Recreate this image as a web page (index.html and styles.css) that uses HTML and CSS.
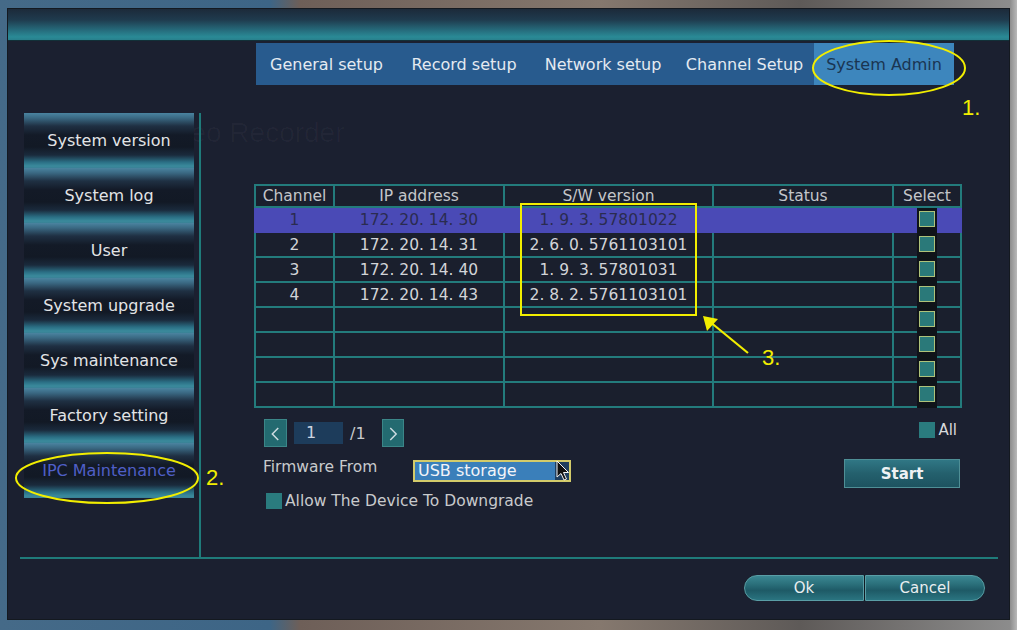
FILE: index.html
```html
<!DOCTYPE html>
<html>
<head>
<meta charset="utf-8">
<title>System Admin - IPC Maintenance</title>
<link rel="stylesheet" href="styles.css">
</head>
<body>
<div class="frame">
  <div class="watermark wm-line">Network Video Recorder</div>
  <div class="titlebar"></div>
  <div class="tabs">
    <div class="tab">General setup</div>
    <div class="tab">Record setup</div>
    <div class="tab">Network setup</div>
    <div class="tab">Channel Setup</div>
    <div class="tab active">System Admin</div>
  </div>
  <div class="main">
    <div class="sidebar">
      <div class="side-item">System version</div>
      <div class="side-item">System log</div>
      <div class="side-item">User</div>
      <div class="side-item">System upgrade</div>
      <div class="side-item">Sys maintenance</div>
      <div class="side-item">Factory setting</div>
      <div class="side-item current">IPC Maintenance</div>
    </div>
    <div class="vsep"></div>
    <div class="content">
      <div class="table-wrap">
        <div class="grid">
          <div class="row head">
            <div class="cell">Channel</div>
            <div class="cell">IP address</div>
            <div class="cell">S/W version</div>
            <div class="cell">Status</div>
            <div class="cell">Select</div>
          </div>
          <div class="row sel">
            <div class="cell">1</div>
            <div class="cell">172. 20. 14. 30</div>
            <div class="cell">1. 9. 3. 57801022</div>
            <div class="cell"></div>
            <div class="cell"></div>
          </div>
          <div class="row">
            <div class="cell">2</div>
            <div class="cell">172. 20. 14. 31</div>
            <div class="cell">2. 6. 0. 5761103101</div>
            <div class="cell"></div>
            <div class="cell"></div>
          </div>
          <div class="row">
            <div class="cell">3</div>
            <div class="cell">172. 20. 14. 40</div>
            <div class="cell">1. 9. 3. 57801031</div>
            <div class="cell"></div>
            <div class="cell"></div>
          </div>
          <div class="row">
            <div class="cell">4</div>
            <div class="cell">172. 20. 14. 43</div>
            <div class="cell">2. 8. 2. 5761103101</div>
            <div class="cell"></div>
            <div class="cell"></div>
          </div>
          <div class="row"><div class="cell"></div><div class="cell"></div><div class="cell"></div><div class="cell"></div><div class="cell"></div></div>
          <div class="row"><div class="cell"></div><div class="cell"></div><div class="cell"></div><div class="cell"></div><div class="cell"></div></div>
          <div class="row"><div class="cell"></div><div class="cell"></div><div class="cell"></div><div class="cell"></div><div class="cell"></div></div>
          <div class="row"><div class="cell"></div><div class="cell"></div><div class="cell"></div><div class="cell"></div><div class="cell"></div></div>
        </div>
        <div class="select-strip">
          <span class="chk"></span><span class="chk"></span><span class="chk"></span><span class="chk"></span>
          <span class="chk"></span><span class="chk"></span><span class="chk"></span><span class="chk"></span>
        </div>
      </div>

      <div class="pager">
        <div class="pbtn">
          <svg width="23" height="28" viewBox="0 0 23 28"><polyline points="14.5,7.5 8,14 14.5,20.5" fill="none" stroke="#cfdde2" stroke-width="1.6"/></svg>
        </div>
        <div class="pinput">1</div>
        <div class="ptotal">/1</div>
        <div class="pbtn next">
          <svg width="22" height="28" viewBox="0 0 22 28"><polyline points="8,7.5 14.5,14 8,20.5" fill="none" stroke="#cfdde2" stroke-width="1.6"/></svg>
        </div>
        <div class="all"><span class="box"></span><span>All</span></div>
      </div>

      <div class="fw-row">
        <div class="fw-label">Firmware From</div>
        <div class="dropdown">
          <span class="dd-text">USB storage</span>
          <span class="dd-arrow"></span>
        </div>
        <div class="start-btn">Start</div>
      </div>

      <div class="allow-row">
        <span class="box"></span><span>Allow The Device To Downgrade</span>
      </div>
    </div>
  </div>
  <div class="hsep"></div>
  <div class="footer">
    <div class="pill">
      <div class="pill-btn left">Ok</div>
      <div class="pill-btn right">Cancel</div>
    </div>
  </div>
</div>

<svg class="annot" width="1017" height="630" viewBox="0 0 1017 630">
  <ellipse cx="889" cy="68" rx="76" ry="27" fill="none" stroke="#f2ee00" stroke-width="2"/>
  <text x="962" y="115" class="annot-text">1.</text>
  <ellipse cx="107" cy="478" rx="91" ry="25" fill="none" stroke="#f2ee00" stroke-width="2"/>
  <text x="206" y="485" class="annot-text">2.</text>
  <rect x="521" y="204" width="175" height="111" fill="none" stroke="#f2ee00" stroke-width="2"/>
  <line x1="748" y1="353" x2="709" y2="321" stroke="#f2ee00" stroke-width="2.2"/>
  <polygon points="703,316 718,319 707,331" fill="#f2ee00"/>
  <text x="762" y="365" class="annot-text">3.</text>
  <g transform="translate(557,461)">
    <path d="M0,0 L0,16 L4,12.5 L7,19 L9.5,18 L6.5,11.5 L11.5,11.5 Z" fill="#111" stroke="#f4f4f4" stroke-width="1"/>
  </g>
</svg>
</body>
</html>
```

FILE: styles.css
```css
html, body {
  margin: 0;
  padding: 0;
}

body {
  width: 1017px;
  height: 630px;
  overflow: hidden;
  position: relative;
  font-family: "DejaVu Sans", Verdana, sans-serif;
  background:
    linear-gradient(90deg, #456a88 0px, #3d6586 270px, #6e5f58 300px, #85786e 600px, #5e5a58 800px, #8c8c8c 1010px, #b8b8b8 1017px);
}

.frame {
  position: relative;
  margin: 8px 0 0 7px;
  width: 1003px;
  height: 612px;
  box-sizing: border-box;
  border: 1px solid #141920;
  background: #1b2030;
  display: flex;
  flex-direction: column;
  overflow: hidden;
}

.watermark {
  position: absolute;
  z-index: 0;
  color: rgba(255, 255, 255, 0.03);
  white-space: nowrap;
  font-family: "Liberation Sans", Arial, sans-serif;
}

.wm-line {
  left: 32px;
  top: 110px;
  font-size: 28px;
  line-height: 28px;
}

.titlebar {
  position: relative;
  z-index: 1;
  height: 31px;
  flex: none;
  background: linear-gradient(180deg, #1c2a3a 0%, #1f3b4e 35%, #266e7e 70%, #2a8a96 90%, #287f8c 100%);
  border-bottom: 1px solid #123038;
}

.tabs {
  position: relative;
  z-index: 1;
  flex: none;
  margin: 2px 0 0 248px;
  width: 698px;
  height: 42px;
  display: grid;
  grid-template-columns: 141px 134px 144px 139px 140px;
  background: #285b8e;
}

.tab {
  display: flex;
  align-items: center;
  justify-content: center;
  color: #e4eaf1;
  font-size: 16px;
  white-space: nowrap;
}

.tab.active {
  background: #3d86bd;
  color: #1a3552;
}

.main {
  position: relative;
  z-index: 1;
  flex: none;
  margin-top: 28px;
  height: 444px;
  display: flex;
}

.sidebar {
  margin-left: 16px;
  width: 170px;
  display: flex;
  flex-direction: column;
}

.side-item {
  height: 55px;
  display: flex;
  align-items: center;
  justify-content: center;
  color: #e2e4e6;
  font-size: 16px;
  white-space: nowrap;
  background: linear-gradient(180deg,
    #4a84a0 0px, #3a6882 5px, #1f3043 13px, #131a27 22px,
    #121925 34px, #1a2a3c 42px, #2a6e84 49px, #3a8a9c 53px, #3a8196 55px);
}

.side-item.current {
  color: #4f5fc6;
}

.vsep {
  margin-left: 5px;
  width: 2px;
  background: #1f7b7a;
}

.content {
  flex: 1;
  padding: 71px 0 0 53px;
  display: flex;
  flex-direction: column;
}

.table-wrap {
  position: relative;
  width: 708px;
}

.grid {
  display: flex;
  flex-direction: column;
  gap: 2px;
  padding: 2px;
  background: #237b7c;
}

.row {
  display: grid;
  grid-template-columns: 77px 168px 207px 178px 66px;
  gap: 2px;
  height: 23px;
}

.row.head {
  height: 20px;
}

.cell {
  background: #1a1f2d;
  display: flex;
  align-items: center;
  justify-content: center;
  color: #d2d4d8;
  font-size: 15.5px;
  white-space: nowrap;
}

.row.head .cell {
  color: #c4c6ca;
}

.row.sel {
  background: #4a4ab6;
  margin: 0 -2px -2px;
  padding: 0 2px 2px;
}

.row.sel .cell {
  background: transparent;
  color: #2a2c50;
}

.select-strip {
  position: absolute;
  left: 663px;
  top: 24px;
  width: 20px;
  height: 200px;
  background: #0f1319;
  display: flex;
  flex-direction: column;
  align-items: center;
  gap: 9px;
  padding-top: 3px;
  box-sizing: border-box;
}

.chk {
  display: block;
  width: 16px;
  height: 16px;
  box-sizing: border-box;
  background: #2a7979;
  border: 1px solid #aec27a;
}

.pager {
  margin-top: 11px;
  width: 708px;
  display: flex;
  align-items: center;
}

.pbtn {
  margin-left: 10px;
  width: 23px;
  height: 28px;
  box-sizing: border-box;
  background: #236a70;
  border: 1px solid #3b8688;
  display: flex;
}

.pbtn svg {
  display: block;
}

.pbtn.next {
  margin-left: 16px;
  width: 22px;
}

.pinput {
  margin-left: 7px;
  width: 49px;
  height: 22px;
  box-sizing: border-box;
  background: #1d3c5b;
  color: #ccd4e0;
  font-size: 16px;
  line-height: 22px;
  padding-left: 12px;
}

.ptotal {
  margin-left: 7px;
  color: #c8cacc;
  font-size: 16px;
}

.all {
  margin-left: auto;
  margin-right: 5px;
  margin-bottom: 6px;
  display: flex;
  align-items: center;
  gap: 3px;
  color: #d8dadc;
  font-size: 15px;
}

.box {
  display: block;
  width: 16px;
  height: 16px;
  background: #2a7b7e;
}

.fw-row {
  margin-top: 12px;
  width: 708px;
  display: flex;
  align-items: flex-start;
}

.fw-label {
  margin-left: 9px;
  width: 150px;
  margin-top: -1px;
  line-height: 18px;
  color: #c8cacc;
  font-size: 15.5px;
  white-space: nowrap;
}

.dropdown {
  margin-top: 1px;
  width: 158px;
  height: 22px;
  box-sizing: border-box;
  border: 2px solid #d3cb6a;
  background: #3a7fba;
  display: flex;
  align-items: center;
}

.dd-text {
  flex: 1;
  padding-left: 3px;
  color: #f2f4f8;
  font-size: 16px;
  line-height: 18px;
}

.dd-arrow {
  width: 14px;
  height: 18px;
  background: #1f3e5e;
}

.start-btn {
  margin-left: auto;
  margin-right: 2px;
  width: 116px;
  height: 29px;
  box-sizing: border-box;
  border: 1px solid #4f8f96;
  background: linear-gradient(180deg, #307785 0%, #24606d 50%, #1d5360 100%);
  color: #eef2f4;
  font-size: 15px;
  font-weight: bold;
  display: flex;
  align-items: center;
  justify-content: center;
}

.allow-row {
  margin-top: 4px;
  margin-left: 12px;
  display: flex;
  align-items: center;
  gap: 3px;
  color: #c8cacc;
  font-size: 15.5px;
}

.hsep {
  flex: none;
  margin: 0 11px 0 12px;
  height: 2px;
  background: #1f7b7a;
}

.footer {
  flex: none;
  margin-top: 16px;
  padding-right: 24px;
  display: flex;
  justify-content: flex-end;
}

.pill {
  display: flex;
  gap: 1px;
  background: #0f1a22;
  border-radius: 13px;
}

.pill-btn {
  width: 120px;
  height: 26px;
  box-sizing: border-box;
  border: 1px solid #5a9ea6;
  background: linear-gradient(180deg, #3b8792 0%, #2a6f7a 35%, #1e5a66 60%, #2a7480 100%);
  color: #e8eef0;
  font-size: 15px;
  display: flex;
  align-items: center;
  justify-content: center;
}

.pill-btn.left {
  border-radius: 13px 0 0 13px;
}

.pill-btn.right {
  border-radius: 0 13px 13px 0;
}

.annot {
  position: absolute;
  z-index: 10;
  left: 0;
  top: 0;
  pointer-events: none;
}

.annot-text {
  fill: #f2ee00;
  font-family: "Liberation Sans", Arial, sans-serif;
  font-size: 22px;
}
```
